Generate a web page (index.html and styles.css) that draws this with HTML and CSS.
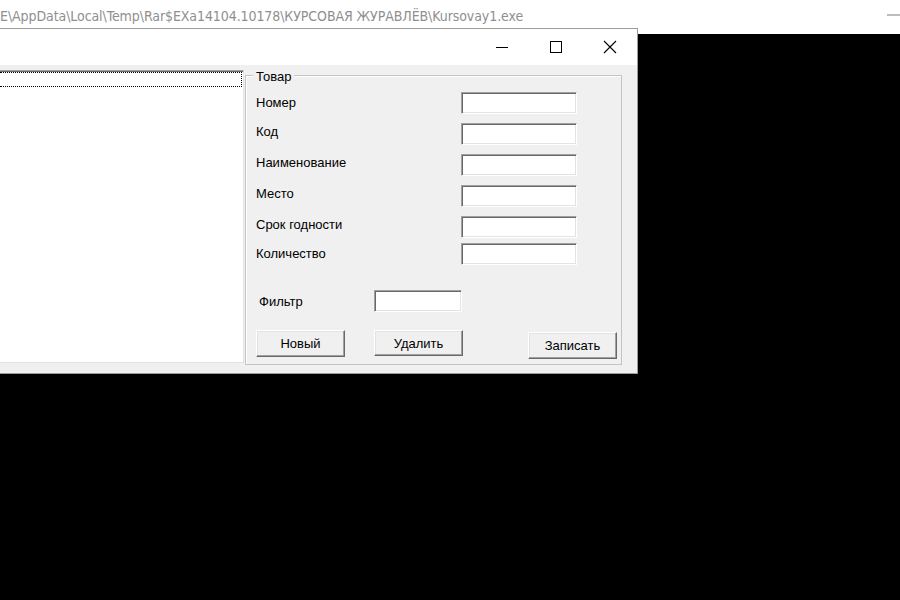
FILE: index.html
```html
<!DOCTYPE html>
<html lang="ru">
<head>
<meta charset="utf-8">
<title>Kursovay1</title>
<link rel="stylesheet" href="styles.css">
</head>
<body>
<div class="topbar">
  <span class="path">E\AppData\Local\Temp\Rar$EXa14104.10178\КУРСОВАЯ ЖУРАВЛЁВ\Kursovay1.exe</span>
  <span class="top-min"></span>
</div>

<div class="window">
  <div class="titlebar">
    <div class="ctrl">
      <svg width="14" height="14" viewBox="0 0 14 14"><path d="M1 7.5H13" stroke="#000" stroke-width="1"/></svg>
    </div>
    <div class="ctrl">
      <svg width="14" height="14" viewBox="0 0 14 14"><rect x="1.5" y="1.5" width="11" height="11" fill="none" stroke="#000" stroke-width="1"/></svg>
    </div>
    <div class="ctrl">
      <svg width="14" height="14" viewBox="0 0 14 14"><path d="M1 1L13 13M13 1L1 13" stroke="#000" stroke-width="1.1"/></svg>
    </div>
  </div>

  <div class="client">
    <div class="listbox">
      <div class="focus-item"></div>
    </div>

    <div class="group">
      <span class="legend">Товар</span>
      <div class="fields">
        <span class="lbl lbl-mid">Номер</span><span class="tb"></span>
        <span class="lbl">Код</span><span class="tb"></span>
        <span class="lbl">Наименование</span><span class="tb"></span>
        <span class="lbl">Место</span><span class="tb"></span>
        <span class="lbl">Срок годности</span><span class="tb"></span>
        <span class="lbl lbl-mid">Количество</span><span class="tb"></span>
      </div>
      <div class="filter">
        <span class="filter-lbl">Фильтр</span>
        <span class="tb tb-filter"></span>
      </div>
      <div class="buttons">
        <button class="btn btn-new">Новый</button>
        <button class="btn btn-del">Удалить</button>
        <button class="btn btn-save">Записать</button>
      </div>
    </div>
  </div>
</div>
</body>
</html>
```

FILE: styles.css
```css
html, body {
  margin: 0;
  padding: 0;
}
body {
  width: 900px;
  height: 600px;
  background: #000;
  position: relative;
  overflow: hidden;
  font-family: "Liberation Sans", Arial, sans-serif;
}

.topbar {
  height: 34px;
  background: #fff;
  display: flex;
  align-items: center;
  justify-content: space-between;
}
.path {
  font-family: "DejaVu Sans Condensed", "DejaVu Sans", sans-serif;
  font-stretch: condensed;
  font-size: 14px;
  letter-spacing: -0.08px;
  color: #8f8f8f;
  white-space: nowrap;
  margin-top: -2px;
}
.top-min {
  width: 13px;
  height: 2px;
  background: #bdbdbd;
  margin-top: -4px;
}

.window {
  position: absolute;
  left: 0;
  top: 28px;
  width: 637px;
  height: 344px;
  border-top: 1px solid #9c9c9c;
  border-right: 1px solid #9c9c9c;
  border-bottom: 1px solid #9c9c9c;
  background: #f0f0f0;
  display: flex;
  flex-direction: column;
}

.titlebar {
  height: 36px;
  background: #fff;
  display: flex;
  justify-content: flex-end;
}
.ctrl {
  width: 54px;
  height: 36px;
  display: flex;
  align-items: center;
  justify-content: center;
  padding-bottom: 1px;
  box-sizing: border-box;
}

.client {
  flex: 1;
  display: flex;
  align-items: flex-start;
  background: #f0f0f0;
}

.listbox {
  width: 244px;
  height: 293px;
  margin-top: 5px;
  box-sizing: border-box;
  background: #fff;
  border-top: 1px solid #a0a0a0;
  border-right: 1px solid #e3e3e3;
  border-bottom: 1px solid #e3e3e3;
  box-shadow: inset 0 1px 0 #696969;
  padding-top: 1px;
}
.focus-item {
  height: 15px;
  margin-right: 1px;
  box-sizing: border-box;
  border-top: 1px dotted #000;
  border-bottom: 1px dotted #000;
  border-right: 1px dotted #000;
}

.group {
  position: relative;
  width: 377px;
  height: 290px;
  margin-top: 10px;
  margin-left: 1px;
  box-sizing: border-box;
  border: 1px solid #c4c4c4;
  box-shadow: inset 1px 1px 0 #fff;
  padding-left: 10px;
  font-size: 13px;
  color: #000;
}
.legend {
  position: absolute;
  left: 7px;
  top: -7px;
  padding: 0 3px 0 3px;
  background: #f0f0f0;
  line-height: 15px;
}

.fields {
  display: grid;
  grid-template-columns: 205px 116px;
  grid-template-rows: 31px 31px 31px 31px 27px 22px;
  margin-top: 16px;
}
.lbl {
  line-height: 15px;
  padding-top: 1px;
}
.lbl-mid {
  padding-top: 3px;
}

.tb {
  display: block;
  width: 116px;
  height: 22px;
  box-sizing: border-box;
  background: #fff;
  border-top: 1px solid #a0a0a0;
  border-left: 1px solid #a0a0a0;
  border-bottom: 1px solid #fff;
  border-right: 1px solid #fff;
  box-shadow: inset 1px 1px 0 #696969, inset -1px -1px 0 #e3e3e3;
}

.filter {
  display: flex;
  align-items: flex-start;
  margin-top: 25px;
}
.filter-lbl {
  width: 115px;
  padding-left: 3px;
  padding-top: 4px;
  line-height: 15px;
}
.tb-filter {
  width: 88px;
}

.buttons {
  display: flex;
  align-items: flex-start;
  margin-top: 18px;
}
.btn {
  width: 89px;
  height: 27px;
  box-sizing: border-box;
  margin: 0;
  padding: 0;
  font-family: "Liberation Sans", Arial, sans-serif;
  font-size: 13px;
  color: #000;
  background: #f0f0f0;
  border-top: 1px solid #fff;
  border-left: 1px solid #fff;
  border-bottom: 1px solid #696969;
  border-right: 1px solid #696969;
  box-shadow: inset -1px -1px 0 #a0a0a0, inset 1px 1px 0 #e3e3e3;
}
.btn-del {
  height: 26px;
  margin-left: 29px;
}
.btn-save {
  margin-left: 65px;
  margin-top: 2px;
}
```
